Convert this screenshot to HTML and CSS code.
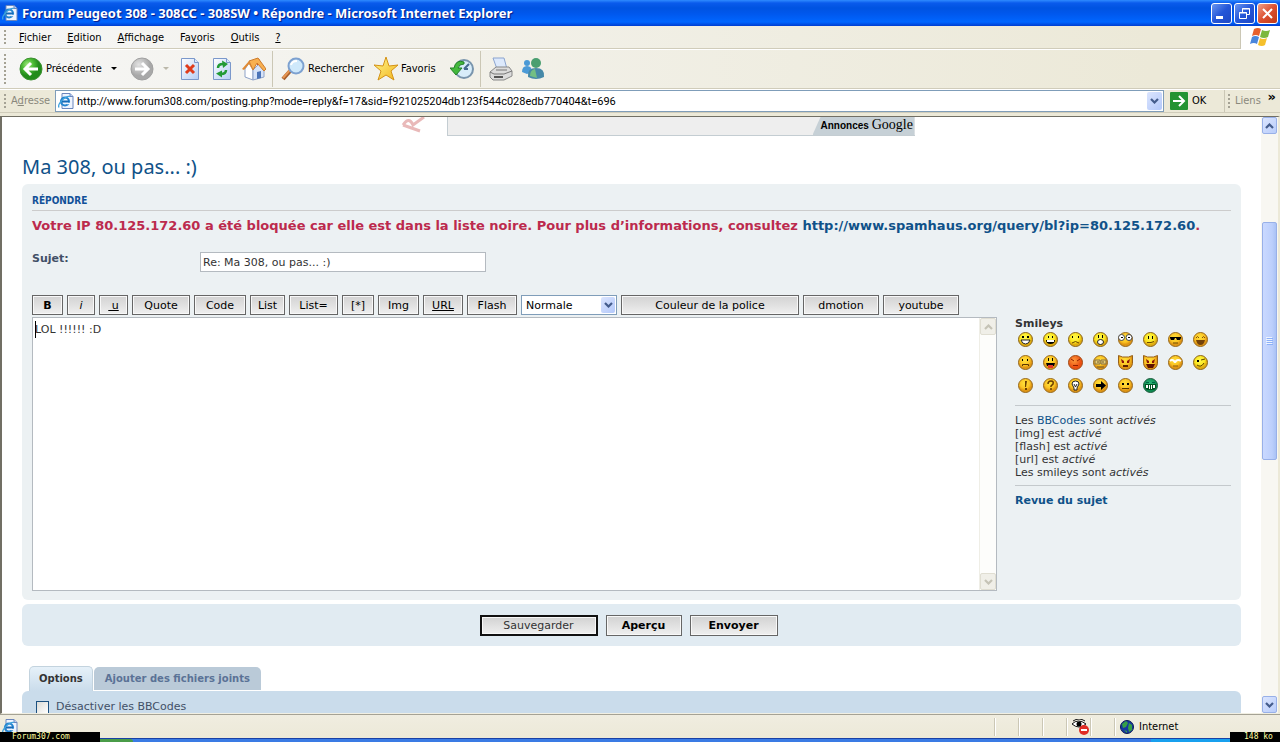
FILE: index.html
```html
<!DOCTYPE html>
<html lang="fr">
<head>
    <meta charset="UTF-8">
    <meta name="viewport" content="width=device-width, initial-scale=1.0">
    <title>Forum Peugeot 308 - 308CC - 308SW • Répondre</title>
    <link rel="stylesheet" href="styles.css">
</head>
<body>
    <!-- Shared shapes -->
    <svg class="defs" aria-hidden="true">
        <defs>
            <radialGradient id="gYellow" cx="45%" cy="35%"><stop offset="0" stop-color="#fffb50"/><stop offset=".7" stop-color="#fbe620"/><stop offset="1" stop-color="#e0ac10"/></radialGradient>
            <radialGradient id="gAmber" cx="45%" cy="35%"><stop offset="0" stop-color="#ffe23c"/><stop offset=".7" stop-color="#fbc424"/><stop offset="1" stop-color="#df9614"/></radialGradient>
            <radialGradient id="gRed" cx="40%" cy="35%"><stop offset="0" stop-color="#ff9c3c"/><stop offset="1" stop-color="#ea4f12"/></radialGradient>
            <radialGradient id="gGreen" cx="45%" cy="35%"><stop offset="0" stop-color="#2bb878"/><stop offset="1" stop-color="#0c8a50"/></radialGradient>
            <radialGradient id="gBack" cx="35%" cy="30%"><stop offset="0" stop-color="#a4e884"/><stop offset=".5" stop-color="#4fbe36"/><stop offset="1" stop-color="#228c1b"/></radialGradient>
            <radialGradient id="gFwd" cx="35%" cy="30%"><stop offset="0" stop-color="#e2e2e2"/><stop offset="1" stop-color="#a8a8a8"/></radialGradient>
            <linearGradient id="gPage" x2="1" y2="1"><stop offset="0" stop-color="#fff"/><stop offset="1" stop-color="#b4cdf5"/></linearGradient>
            <linearGradient id="gStar" x2="1" y2="1"><stop offset="0" stop-color="#fff890"/><stop offset="1" stop-color="#f2b41c"/></linearGradient>
            <symbol id="yellow" viewBox="0 0 15 15"><circle cx="7.5" cy="7.5" r="7" fill="url(#gYellow)" stroke="#8a651c"/></symbol>
            <symbol id="amber" viewBox="0 0 15 15"><circle cx="7.5" cy="7.5" r="7" fill="url(#gAmber)" stroke="#96691f"/></symbol>
            <symbol id="devil" viewBox="0 0 15 15"><path d="M.5.5l4 1.5h6l4-1.5v8q-1 6-7 6t-7-6z" fill="url(#gAmber)" stroke="#96601a"/></symbol>
            <symbol id="ie" viewBox="0 0 16 16">
                <path d="M4 .5h8l3 3v12H4z" fill="#eef4ff" stroke="#6b86bd"/>
                <path d="M12 .5v3h3" fill="#b9cdf0" stroke="#6b86bd"/>
                <circle cx="7" cy="8.500" r="4" fill="none" stroke="#2484cf" stroke-width="2.200"/>
                <path d="M4 8.500h7" stroke="#1569b6" stroke-width="2"/>
                <path d="M9 10.500h3" stroke="#eef4ff" stroke-width="1.500"/>
                <path d="M1 14.500C-1 11 8 2 12 3.500" fill="none" stroke="#3fa3dd" stroke-width="1.300"/>
            </symbol>
            <symbol id="up" viewBox="0 0 9 6"><path d="M1 5l3.500-3.500L8 5" fill="none" stroke="currentColor" stroke-width="2.200"/></symbol>
            <symbol id="down" viewBox="0 0 9 6"><path d="M1 1l3.500 3.500L8 1" fill="none" stroke="currentColor" stroke-width="2.200"/></symbol>
        </defs>
    </svg>

    <header class="titlebar">
        <svg width="16" height="16"><use href="#ie"/></svg>
        <span class="window-title">Forum Peugeot 308 - 308CC - 308SW • Répondre - Microsoft Internet Explorer</span>
        <button class="win-btn" aria-label="Réduire"><svg width="19" height="19"><path d="M4 13.500h7" stroke="#fff" stroke-width="3"/></svg></button>
        <button class="win-btn" aria-label="Niveau inférieur"><svg width="19" height="19" fill="none" stroke="#fff"><path d="M7.500 8V4.500h7v6H12M7 5h8M4.500 8.500h7v6h-7zM4 9h8"/></svg></button>
        <button class="win-btn close" aria-label="Fermer"><svg width="19" height="19"><path d="M5 5l9 9M14 5l-9 9" stroke="#fff" stroke-width="2"/></svg></button>
    </header>

    <nav class="menubar">
        <span class="grip"></span>
        <ul class="menu">
            <li><u>F</u>ichier</li>
            <li><u>E</u>dition</li>
            <li><u>A</u>ffichage</li>
            <li>Fa<u>v</u>oris</li>
            <li><u>O</u>utils</li>
            <li><u>?</u></li>
        </ul>
        <span class="flag">
            <svg width="22" height="20" viewBox="0 0 22 20">
                <path d="M4 2q4-2 7 0l-2 7q-3-2-7 0z" fill="#e8602c"/>
                <path d="M12 3q4 2 8 0l-2 7q-4 2-8 0z" fill="#7cb83c"/>
                <path d="M2 10q3-2 7 0l-2 7q-3-2-7 0z" fill="#4a86dc"/>
                <path d="M10 11q3 2 7 0l-2 7q-3 2-7 0z" fill="#f5c02c"/>
            </svg>
        </span>
    </nav>

    <div class="toolbar">
        <span class="grip"></span>
        <button class="tool back">
            <svg width="24" height="24"><circle cx="12" cy="12" r="11" fill="url(#gBack)" stroke="#3d9132"/><path d="M19 12H7M12 6l-6 6 6 6" fill="none" stroke="#fff" stroke-width="3"/></svg>
            <span class="label-back">Précédente</span>
            <svg width="7" height="4"><path d="M0 0h6L3 3z"/></svg>
        </button>
        <button class="tool forward" aria-label="Suivante">
            <svg width="24" height="24"><circle cx="12" cy="12" r="11" fill="url(#gFwd)" stroke="#a0a0a0"/><path d="M5 12h12M12 6l6 6-6 6" fill="none" stroke="#fff" stroke-width="3"/></svg>
            <svg width="7" height="4"><path d="M0 0h6L3 3z" fill="#bbb8aa"/></svg>
        </button>
        <button class="tool" aria-label="Arrêter"><svg width="24" height="24"><path d="M3.500 1.500h13l4 4v17h-17z" fill="url(#gPage)" stroke="#7b98cb"/><path d="M16.500 1.500v4h4" fill="#dce8fb" stroke="#7b98cb"/><path d="M8 8l8 8M16 8l-8 8" stroke="#e03c1c" stroke-width="3"/></svg></button>
        <button class="tool" aria-label="Actualiser"><svg width="24" height="24"><path d="M3.500 1.500h13l4 4v17h-17z" fill="url(#gPage)" stroke="#7b98cb"/><path d="M16.500 1.500v4h4" fill="#dce8fb" stroke="#7b98cb"/><path d="M8 11q0-4 5-4M16 13q0 4-5 4" fill="none" stroke="#229a35" stroke-width="2.500"/><path d="M12 3.500l6 3.500-5 4zM12 20.500l-6-4 6-3z" fill="#229a35"/></svg></button>
        <button class="tool" aria-label="Démarrage"><svg width="24" height="24">
            <path d="M15 2h2.500v6H15z" fill="#d04830"/>
            <path d="M3 12v8l8 3V12L7 6z" fill="#fff" stroke="#8ea2c8"/>
            <path d="M11 13l6-6 5 7v6l-11 3z" fill="#d7e3f8" stroke="#8ea2c8"/>
            <path d="M15 15l4-1v7l-4 1z" fill="#4c74b8"/>
            <path d="M7 4l9-3 8 11-2 2-7-8-4 7z" fill="#f8b050" stroke="#cc7b2c"/>
            <path d="M7 4l-7 8 2 1 5-6 4 7z" fill="#e08a34"/>
        </svg></button>
        <span class="sep"></span>
        <button class="tool">
            <svg width="24" height="24"><path d="M2 22l8-9" stroke="#a65b28" stroke-width="4"/><path d="M2 21l7-8" stroke="#e69552" stroke-width="2"/><circle cx="15" cy="9" r="7.500" fill="#cfe9fb" stroke="#7da1d0" stroke-width="2"/><path d="M10 8q1-4 6-4" stroke="#fff" stroke-width="2" fill="none"/></svg>
            <span class="label-search">Rechercher</span>
        </button>
        <button class="tool">
            <svg width="24" height="24"><path d="M12 0l3 9 9-1-7 6 3 9-8-5-8 5 3-9-7-6 9 1z" fill="url(#gStar)" stroke="#d49216"/></svg>
            <span class="label-fav">Favoris</span>
        </button>
        <button class="tool" aria-label="Historique"><svg width="24" height="24"><circle cx="14" cy="12" r="9" fill="#d8edfa" stroke="#7995ad" stroke-width="2"/><path d="M14 12l5-5M14 12h4" stroke="#466a90" stroke-width="2"/><path d="M14 5q-8-3-10 6H0l6 7 6-7H8q1-4 6-4z" fill="#43b83c" stroke="#24802a"/></svg></button>
        <span class="sep"></span>
        <button class="tool" aria-label="Imprimer"><svg width="24" height="24"><path d="M4 1h11l3 11H8z" fill="#dce9fc" stroke="#8ba4cf"/><path d="M1 15l6-5h13l3 4v5l-8 4H4l-3-3z" fill="#dcdcdc" stroke="#888"/><path d="M1 15l4 2h10l8-3M7 13h11" fill="none" stroke="#777"/><path d="M5 20h9" stroke="#555" stroke-width="2"/></svg></button>
        <button class="tool" aria-label="Messenger"><svg width="24" height="24"><circle cx="6" cy="6" r="3" fill="#4b9ad6"/><path d="M1 15q0-6 5-6t5 6l-5 2z" fill="#4b9ad6"/><circle cx="15" cy="6" r="5" fill="#4a9f70"/><path d="M7 20q-1-9 8-9t8 9q-8 4-16 0z" fill="#4689a8"/><path d="M9 19q0-6 5-7l2 9z" fill="#73bf83"/></svg></button>
    </div>

    <div class="addressbar">
        <span class="grip"></span>
        <label class="address-label" for="address">A<u>d</u>resse</label>
        <div class="address-field">
            <svg width="16" height="16"><use href="#ie"/></svg>
            <input id="address" type="text" value="http://www.forum308.com/posting.php?mode=reply&amp;f=17&amp;sid=f921025204db123f544c028edb770404&amp;t=696">
            <button class="drop-btn" aria-label="Adresses"><svg width="9" height="6"><use href="#down"/></svg></button>
        </div>
        <button class="go">
            <svg width="18" height="18"><rect width="18" height="18" rx="1" fill="#249332"/><path d="M3 9h10M9 4l5 5-5 5" fill="none" stroke="#fff" stroke-width="2"/></svg>
            OK
        </button>
        <div class="links"><span class="grip"></span><span class="links-label">Liens</span><span class="chevrons">»</span></div>
    </div>

    <div class="viewport">
        <main class="page">
            <div class="banner">
                <svg class="watermark" width="26" height="20"><path d="M2 8Q8-1 12 8L23 0M2 8l17 6" fill="none" stroke="#e9b9b9" stroke-width="3"/></svg>
                <div class="ad"><a class="ad-label" href="#">Annonces <span class="google">Google</span></a></div>
            </div>

            <h2><a href="#">Ma 308, ou pas... :)</a></h2>

            <section class="panel editor">
                <h3>Répondre</h3>
                <p class="error">Votre IP 80.125.172.60 a été bloquée car elle est dans la liste noire. Pour plus d’informations, consultez <a href="#">http://www.spamhaus.org/query/bl?ip=80.125.172.60</a>.</p>
                <div class="subject-row">
                    <label for="subject">Sujet:</label>
                    <input id="subject" type="text" value="Re: Ma 308, ou pas... :)">
                </div>

                <div class="format-buttons">
                    <button class="w31"><b>B</b></button>
                    <button class="w28"><i>i</i></button>
                    <button class="w29"><u>&nbsp;u</u></button>
                    <button class="w58">Quote</button>
                    <button class="w52">Code</button>
                    <button class="w35">List</button>
                    <button class="w49">List=</button>
                    <button class="w32">[*]</button>
                    <button class="w41">Img</button>
                    <button class="w40"><u>URL</u></button>
                    <button class="w50">Flash</button>
                    <span class="select-box">
                        <select aria-label="Taille de la police"><option>Normale</option></select>
                        <span class="drop-btn"><svg width="9" height="6"><use href="#down"/></svg></span>
                    </span>
                    <button class="w178">Couleur de la police</button>
                    <button class="w76">dmotion</button>
                    <button class="w76">youtube</button>
                </div>

                <div class="compose">
                    <div class="message">
                        <textarea aria-label="Message">LOL !!!!!! :D</textarea>
                        <span class="text-caret"></span>
                        <div class="message-scroll">
                            <span class="scroll-off"><svg width="9" height="6"><use href="#up"/></svg></span>
                            <span class="scroll-off"><svg width="9" height="6"><use href="#down"/></svg></span>
                        </div>
                    </div>
                    <aside class="side">
                        <strong>Smileys</strong>
                        <div class="smileys">
                            <svg><use href="#yellow"/><path d="M4 4h2v2H4zM9 4h2v2H9z"/><path d="M3 8h9q-1 4-4.500 4T3 8z" fill="#fff" stroke="#222"/></svg>
                            <svg><use href="#yellow"/><path d="M5 4h1v2H5zM9 4h1v2H9zM3 8h9q0 4-4.500 4T3 8z"/><path d="M4 9h7" stroke="#fff" stroke-width="2"/></svg>
                            <svg><use href="#yellow"/><path d="M4 4h1v2H4zM10 4h1v2h-1z"/><path d="M4 11q3.500-3 7 0" fill="none" stroke="#6a4600"/></svg>
                            <svg><use href="#yellow"/><path d="M5 3h1v3H5zM9 3h1v3H9z"/><ellipse cx="7.500" cy="10" rx="3" ry="2.500" fill="#fff" stroke="#222"/></svg>
                            <svg><use href="#amber"/><circle cx="3.500" cy="5.500" r="3" fill="#fff" stroke="#444"/><circle cx="11" cy="5.500" r="3" fill="#fff" stroke="#444"/><path d="M3 5h2v1H3zM10 5h2v1h-2z"/></svg>
                            <svg><use href="#yellow"/><path d="M5 4h1v3H5zM9 4h1v3H9z"/><path d="M4 10.500h4l3-1" fill="none" stroke="#6a4600"/></svg>
                            <svg><use href="#amber"/><path d="M2 5h11v1l-1 2H9L8 6H7L6 8H3L2 6z"/><path d="M5 11h5" stroke="#6a4600"/></svg>
                            <svg><use href="#amber"/><path d="M3 6q1.500-3 3 0M9 6q1.500-3 3 0" fill="none" stroke="#80500a"/><path d="M3 8h9q-1 5-4.500 5T3 8z" fill="#73420a"/></svg>
                            <svg><use href="#amber"/><path d="M4 4h1v2H4zM9 4h1v2H9z"/><path d="M4.500 11V9.500h6V11" fill="none" stroke="#593600"/></svg>
                            <svg><use href="#amber"/><path d="M5 3h1v3H5zM9 3h1v3H9zM3 8h9l-1 3H4z"/><path d="M5 10h5v3H5z" fill="#e33826"/></svg>
                            <svg><circle cx="7.500" cy="7.500" r="7" fill="url(#gRed)" stroke="#a04c16"/><path d="M3 4l3 2M12 4L9 6M5 10.500h5" stroke="#922000"/></svg>
                            <svg><use href="#amber"/><path d="M2 5h5v4H2zM8 5h5v4H8z" fill="#e9cf73" stroke="#857044"/><path d="M4 7h2M9 7h2M4 12h7" stroke="#6c5830"/></svg>
                            <svg><use href="#devil"/><path d="M3 4l3 2v2H4zM12 4L9 6v2h2z" fill="#8d1408"/><path d="M5 11h5" stroke="#5e2100" stroke-width="2"/></svg>
                            <svg><use href="#devil"/><path d="M3 4l3 2v2H4zM12 4L9 6v2h2z" fill="#8d1408"/><path d="M3 9h9l-2 4H5z" fill="#5e1000"/></svg>
                            <svg><use href="#amber"/><path d="M2 6q2-2 4 0 1 2 2 0 2-2 5 0" fill="none" stroke="#fff" stroke-width="2"/><path d="M5 11h5" stroke="#8c5a10"/></svg>
                            <svg><use href="#yellow"/><path d="M4 5h2v2H4z"/><path d="M8 5l4-1M4 10q4 3 7-2" fill="none" stroke="#5b4200"/></svg>
                            <svg><use href="#amber"/><path d="M7 3h2l-1 6H7zM7 10h2v2H7z" fill="#6b3e00"/></svg>
                            <svg><use href="#amber"/><path d="M5 6q0-3 3-3t2 3l-2 2v1M8 10v2" fill="none" stroke="#6b3e00" stroke-width="1.500"/></svg>
                            <svg><use href="#amber"/><path d="M4 6q0-3 3.500-3T11 6L9 10v2H6v-2z" fill="#fff" stroke="#222"/><path d="M6 6l1.500 3L9 6" fill="none" stroke="#222"/></svg>
                            <svg><use href="#amber"/><path d="M3 6h5V3l5 4.500L8 12V9H3z"/></svg>
                            <svg><use href="#amber"/><path d="M4 5h2v2H4zM9 5h2v2H9z"/><path d="M4 10.500h7" stroke="#593600"/></svg>
                            <svg><circle cx="7.500" cy="7.500" r="7" fill="url(#gGreen)" stroke="#205c3e"/><path d="M2 6h11v4l-2 2H4l-2-2z" fill="#052"/><path d="M3 7h2v3H3zM6 7h1v4H6zM8 7h1v4H8zM10 7h2v3h-2z" fill="#fff"/><path d="M3 4.500h3M9 4.500h3" stroke="#064"/></svg>
                        </div>
                        <hr>
                        <p>Les <a href="#">BBCodes</a> sont <em>activés</em><br>
                        [img] est <em>activé</em><br>
                        [flash] est <em>activé</em><br>
                        [url] est <em>activé</em><br>
                        Les smileys sont <em>activés</em></p>
                        <hr>
                        <a class="review" href="#">Revue du sujet</a>
                    </aside>
                </div>
            </section>

            <div class="panel submit">
                <button class="save">Sauvegarder</button>
                <button class="preview">Aperçu</button>
                <button class="preview send">Envoyer</button>
            </div>

            <div class="tabs">
                <a class="tab active" href="#">Options</a>
                <a class="tab" href="#">Ajouter des fichiers joints</a>
            </div>
            <div class="panel options">
                <label><input type="checkbox"> Désactiver les BBCodes</label>
            </div>
        </main>

        <div class="scrollbar">
            <span class="scroll-btn"><svg width="9" height="6"><use href="#up"/></svg></span>
            <div class="track"><div class="thumb"><svg width="7" height="8"><path d="M0 .5h6M0 2.500h6M0 4.500h6M0 6.500h6" stroke="#eef4fe"/><path d="M1 1.500h6M1 3.500h6M1 5.500h6M1 7.500h6" stroke="#8cb0f8"/></svg></div></div>
            <span class="scroll-btn"><svg width="9" height="6"><use href="#down"/></svg></span>
        </div>
    </div>

    <footer class="statusbar">
        <svg class="status-ie" width="16" height="16"><use href="#ie"/></svg>
        <span class="cell"></span>
        <span class="cell"></span>
        <span class="cell"></span>
        <span class="cell"><svg width="17" height="16"><path d="M0 5q6-6 14 0-7 6-14 0z" fill="#fff" stroke="#111"/><circle cx="7" cy="5" r="2.500"/><path d="M1 2q6-4 12 0" fill="none" stroke="#111"/><circle cx="12" cy="11" r="5" fill="#e02c24"/><path d="M9 11h6" stroke="#fff" stroke-width="2"/></svg></span>
        <span class="cell"></span>
        <span class="cell zone"><svg width="14" height="14"><circle cx="7" cy="7" r="6.500" fill="#1638a0" stroke="#0b1c50"/><path d="M2 4l4-3 2 2-2 4-3 1zM9 3l3 2v5l-3 2-1-4z" fill="#36a046"/><path d="M4 10l3 1v2z" fill="#36a046"/></svg>Internet</span>
    </footer>
    <div class="taskbar"><span class="start"></span><span class="tray"></span></div>
    <span class="stamp site">Forum307.com</span>
    <span class="stamp size">148 ko</span>
</body>
</html>
```
FILE: styles.css
```css
* {
    box-sizing: border-box;
}

body {
    display: flex;
    flex-direction: column;
    height: 100vh;
    margin: 0;
    overflow: hidden;
    position: relative;
    background: #ece9d8;
    color: #000;
    font: 11px/14px "DejaVu Sans Condensed", "DejaVu Sans", sans-serif;
}

.defs {
    position: absolute;
    width: 0;
    height: 0;
}

svg {
    display: block;
    flex: none;
}

button,
input,
select,
textarea {
    font: inherit;
    color: inherit;
    margin: 0;
    padding: 0;
    border: 0;
    border-radius: 0;
    outline: 0;
}

button {
    background: none;
    cursor: pointer;
}

a {
    color: #105289;
    text-decoration: none;
}

/* Window frame */
.titlebar {
    display: flex;
    align-items: center;
    gap: 2px;
    flex: none;
    height: 26px;
    padding: 0 2px;
    background: linear-gradient(#2f8bff 0, #0a5bec 3px, #0053e1 8px, #0058ee 14px, #0066ff 22px, #003dd0 26px);
}

.window-title {
    flex: 1;
    padding-left: 2px;
    color: #fff;
    font: bold 13px/16px "Noto Sans", sans-serif;
    text-shadow: 1px 1px 1px #0a1883;
    white-space: nowrap;
}

.win-btn {
    width: 21px;
    height: 21px;
    border: 1px solid #fff;
    border-radius: 3px;
    background: linear-gradient(135deg, #6a96f0, #2456d8 50%, #1f48c4);
}

.win-btn.close {
    background: linear-gradient(135deg, #f0a088, #dc5030 50%, #c03a18);
}

.menubar,
.toolbar {
    display: flex;
    align-items: center;
    flex: none;
    padding-left: 4px;
    background: linear-gradient(90deg, #f6f6f5, #ece9d8 90%);
    border-bottom: 1px solid #d0ccba;
}

.menubar {
    height: 23px;
}

.grip {
    flex: none;
    width: 2px;
    height: 15px;
    background: repeating-linear-gradient(#a5a294 0, #a5a294 2px, transparent 2px, transparent 4px);
}

.menu {
    display: flex;
    flex: 1;
    gap: 16px;
    margin: 0;
    padding: 1px 0 0 13px;
    list-style: none;
}

.flag {
    display: flex;
    align-items: center;
    justify-content: center;
    width: 40px;
    height: 23px;
    background: #fff;
    border-left: 1px solid #cbc7b5;
}

.toolbar {
    height: 40px;
    gap: 8px;
    border-top: 1px solid #fff;
}

.toolbar .grip {
    height: 30px;
}

.tool {
    display: flex;
    align-items: center;
    gap: 3px;
    flex: none;
    text-align: left;
}

.back {
    margin-left: 5px;
}

.label-back {
    width: 62px;
}

.forward {
    gap: 9px;
    padding: 0 0 0 4px;
}

.label-search {
    width: 58px;
}

.label-fav {
    width: 41px;
}

.sep {
    width: 1px;
    height: 36px;
    margin-left: -2px;
    background: #cbc7b5;
}

.addressbar {
    display: flex;
    align-items: center;
    flex: none;
    height: 24px;
    padding-left: 4px;
    border-top: 1px solid #fff;
    border-bottom: 1px solid #d0ccba;
}

.address-label,
.links-label {
    color: #8a887c;
}

.address-label {
    width: 44px;
    margin-left: 5px;
    flex: none;
}

.address-field {
    display: flex;
    align-items: center;
    flex: 1;
    height: 22px;
    padding: 0 1px 0 2px;
    background: #fff;
    border: 1px solid #7f9db9;
}

.address-field input {
    flex: 1;
    padding: 1px 0 0 3px;
    min-width: 0;
    font-family: Roboto, sans-serif;
}

.drop-btn {
    display: flex;
    align-items: center;
    justify-content: center;
    flex: none;
    width: 15px;
    height: 18px;
    border-radius: 2px;
    background: linear-gradient(135deg, #dbe5fe, #b3c8fa);
    color: #445c8c;
}

.go {
    display: flex;
    align-items: center;
    gap: 4px;
    width: 60px;
    padding-left: 6px;
    flex: none;
}

.links {
    display: flex;
    align-items: center;
    gap: 5px;
    width: 56px;
    height: 22px;
    padding-left: 3px;
    border-left: 1px solid #cbc7b5;
}

.chevrons {
    margin: 0 4px 8px auto;
    font: bold 13px/14px "DejaVu Sans", sans-serif;
}

/* Web page area */
.viewport {
    display: flex;
    flex: 1;
    min-height: 0;
    margin-top: 3px;
    background: #fff;
    border: 1px solid #716f64;
    border-left-width: 2px;
    border-bottom-color: #f1efe2;
    border-right: 2px solid #ece9d8;
}

.page {
    flex: 1;
    min-width: 0;
    height: 100%;
    overflow: hidden;
    padding: 0 20px;
    color: #333;
    font: 11px/13px "DejaVu Sans", sans-serif;
}

.banner {
    display: flex;
    justify-content: center;
    align-items: flex-start;
    gap: 20px;
    height: 38px;
}

.watermark {
    margin-left: 52px;
}

.ad {
    width: 468px;
    height: 19px;
    background: #eee;
    border: solid #c4cdd2;
    border-width: 0 0 1px 1px;
}

.ad-label {
    display: block;
    width: 102px;
    height: 18px;
    margin-left: auto;
    padding-left: 8px;
    background: #c6d0d6;
    clip-path: polygon(8px 0, 100% 0, 100% 100%, 0 100%);
    color: #000;
    font: bold 10px/18px "Liberation Sans", sans-serif;
    white-space: nowrap;
}

.google {
    font: 14px/16px "Liberation Serif", serif;
}

h2 {
    margin: 0 0 5px;
    font: 20px/24px "Noto Sans", sans-serif;
}

.panel {
    border-radius: 6px;
}

.editor {
    padding: 10px 10px 9px;
    background: #ecf1f3;
    margin-bottom: 4px;
}

h3 {
    margin: 0 0 7px;
    padding-bottom: 3px;
    border-bottom: 1px solid #ccc;
    color: #115098;
    font: bold 10px/13px "DejaVu Sans Condensed", sans-serif;
    text-transform: uppercase;
}

.error {
    margin: 0;
    color: #bc2a4d;
    font: bold 13px/15px "DejaVu Sans", sans-serif;
    white-space: nowrap;
}

.subject-row {
    display: flex;
    margin: 19px 0 23px;
}

.subject-row label {
    width: 168px;
    color: #425067;
    font-weight: bold;
}

.subject-row input {
    width: 286px;
    height: 20px;
    padding: 0 2px;
    background: #fff;
    border: 1px solid #b4bac0;
}

.format-buttons {
    display: flex;
    gap: 4px;
    margin-bottom: 2px;
}

.format-buttons button,
.submit button {
    height: 20px;
    flex: none;
    border: 1px solid #666;
    background: linear-gradient(#d2d2d2, #efefef);
    box-shadow: inset 0 0 0 1px #f8f8f8;
    color: #000;
    white-space: nowrap;
}

.w28 { width: 28px; }
.w29 { width: 29px; }
.w31 { width: 31px; }
.w32 { width: 32px; }
.w35 { width: 35px; }
.w40 { width: 40px; }
.w41 { width: 41px; }
.w49 { width: 49px; }
.w50 { width: 50px; }
.w52 { width: 52px; }
.w58 { width: 58px; }
.w76 { width: 76px; }
.w178 { width: 178px; }

.select-box {
    position: relative;
    width: 96px;
}

.select-box select {
    width: 100%;
    height: 20px;
    padding: 0 4px;
    appearance: none;
    background: #fff;
    border: 1px solid #7f9db9;
    color: #000;
}

.select-box .drop-btn {
    position: absolute;
    top: 2px;
    right: 2px;
    width: 14px;
    height: 16px;
    pointer-events: none;
}

.compose {
    display: flex;
    gap: 18px;
}

.message {
    display: flex;
    flex: 1;
    height: 274px;
    position: relative;
    background: #fff;
    border: 1px solid #b4bac0;
}

.message textarea {
    flex: 1;
    padding: 5px 2px;
    resize: none;
    background: #fff;
}

.text-caret {
    position: absolute;
    top: 3px;
    left: 2px;
    width: 1px;
    height: 17px;
    background: #000;
}

.message-scroll {
    display: flex;
    flex-direction: column;
    justify-content: space-between;
    width: 17px;
    background: #fdfdfb;
    border-left: 1px solid #efeee6;
}

.scroll-off {
    display: flex;
    align-items: center;
    justify-content: center;
    height: 17px;
    border: 1px solid #e0ded2;
    border-radius: 2px;
    background: #f0efe8;
    color: #c5c3b6;
}

.side {
    width: 216px;
    flex: none;
}

.side strong,
.review {
    font-weight: bold;
}

.smileys {
    display: grid;
    grid-template-columns: repeat(8, 25px);
    grid-auto-rows: 23px;
    padding: 2px 0 0 3px;
}

.smileys svg {
    width: 15px;
    height: 15px;
}

.side hr {
    margin: 4px 0 8px;
    border: 0;
    border-top: 1px solid #c4c9cc;
}

.side p {
    margin: 0 0 6px;
}

.submit {
    display: flex;
    align-items: center;
    justify-content: center;
    gap: 8px;
    height: 42px;
    padding-right: 6px;
    background: #e1ebf2;
}

.submit button {
    height: 21px;
}

.submit .save {
    width: 118px;
    border: 2px solid #111;
    color: #333;
}

.submit .preview {
    width: 76px;
    font-weight: bold;
}

.submit .send {
    width: 88px;
}

.tabs {
    display: flex;
    gap: 1px;
    margin-top: 20px;
    padding-left: 7px;
    font-size: 10px;
}

.tab {
    height: 24px;
    margin-top: 1px;
    padding: 0 11px;
    border-radius: 5px 5px 0 0;
    background: #bacad8;
    color: #5a7296;
    font-weight: bold;
    line-height: 24px;
    border-bottom: 1px solid #fff;
}

.tab.active {
    height: 25px;
    margin-top: 0;
    padding: 0 9px;
    border: 1px solid #c3d3de;
    border-bottom: 0;
    background: linear-gradient(#e6f1f9, #cadceb);
    color: #333;
}

.options {
    padding: 9px 14px;
    background: #cadceb;
    color: #425067;
}

.options label {
    display: flex;
    align-items: center;
    gap: 7px;
    line-height: 14px;
}

.options input {
    appearance: none;
    width: 13px;
    height: 13px;
    border: 1px solid #1c5180;
    background: linear-gradient(135deg, #dcdcd7, #fff);
}

.scrollbar {
    display: flex;
    flex-direction: column;
    width: 17px;
    flex: none;
    background: #f8f7f2;
}

.scroll-btn,
.thumb {
    display: flex;
    align-items: center;
    justify-content: center;
    height: 17px;
    margin: 0 1px;
    border: 1px solid #98b0e8;
    border-radius: 2px;
    background: linear-gradient(135deg, #dbe5fe, #b9cdfb);
    color: #445c8c;
}

.track {
    flex: 1;
    padding-top: 88px;
}

.thumb {
    height: 238px;
    background: linear-gradient(90deg, #cad9ff, #bccffc 70%, #aac2f5);
}

/* Status bar and what shows of the taskbar */
.statusbar {
    display: flex;
    align-items: center;
    flex: none;
    height: 24px;
    padding-left: 2px;
    border-top: 1px solid #a5a294;
    background: linear-gradient(#f0ede0, #ece9d8);
}

.status-ie {
    margin-right: auto;
}

.cell {
    display: flex;
    align-items: center;
    gap: 5px;
    width: 24px;
    height: 18px;
    padding-left: 5px;
    border-left: 1px solid #cbc7b5;
    box-shadow: inset 1px 0 #fff;
}

.zone {
    width: 166px;
}

.taskbar {
    display: flex;
    justify-content: space-between;
    flex: none;
    height: 4px;
    background: #3a7be4;
    border-top: 1px solid #1941a5;
}

.start {
    width: 133px;
    background: #4a9c48;
    border-radius: 0 3px 0 0;
}

.tray {
    width: 129px;
    background: #18a0ee;
}

.stamp {
    position: absolute;
    bottom: 0;
    height: 10px;
    background: #000;
    color: #ffffa0;
    font: 8px/10px "DejaVu Sans Mono", monospace;
}

.site {
    left: 0;
    width: 100px;
    padding-left: 12px;
}

.size {
    right: 0;
    width: 50px;
    padding-left: 14px;
}
```
